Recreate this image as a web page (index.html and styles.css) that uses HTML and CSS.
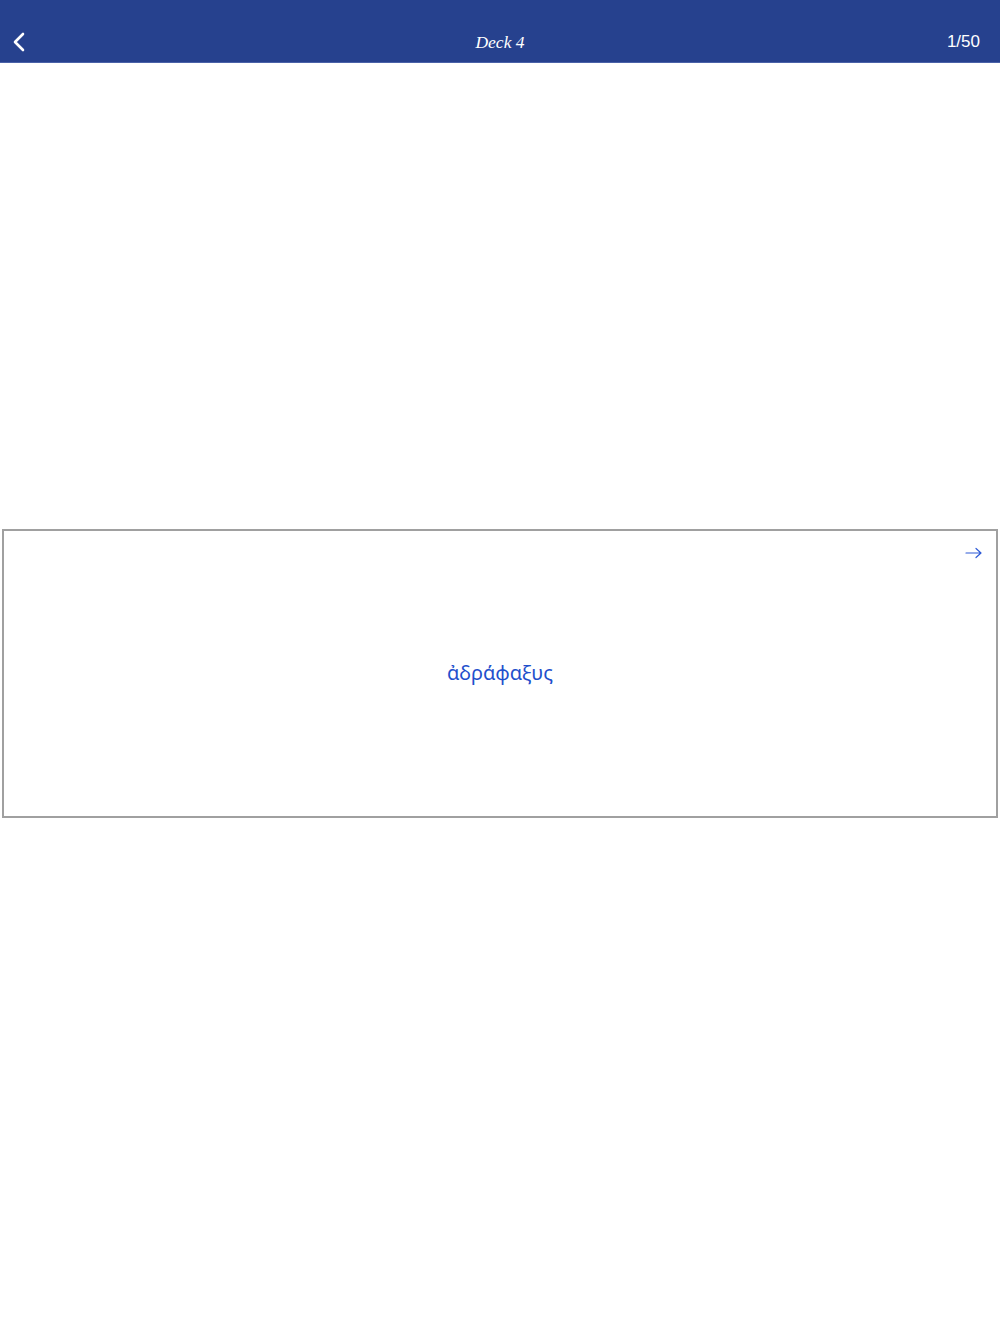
FILE: index.html
```html
<!DOCTYPE html>
<html>
<head>
<meta charset="utf-8">
<link rel="stylesheet" href="styles.css">
</head>
<body>
<header class="topbar">
  <div class="back">
    <svg width="14" height="20" viewBox="0 0 14 20"><path d="M11 2 L3 10 L11 18" fill="none" stroke="#fff" stroke-width="2.6" stroke-linecap="round" stroke-linejoin="round"/></svg>
  </div>
  <div class="title">Deck 4</div>
  <div class="count">1/50</div>
</header>
<main class="stage">
  <section class="card">
    <div class="card-top">
      <svg class="arrow" width="18" height="12" viewBox="0 0 18 12"><path d="M1 6 H16 M11 1.5 L16 6 L11 10.5" fill="none" stroke="#2f5bd6" stroke-width="1.2" stroke-linecap="round" stroke-linejoin="round"/></svg>
    </div>
    <div class="word">ἀδράφαξυς</div>
  </section>
</main>
</body>
</html>
```
FILE: styles.css
```css
* { box-sizing: border-box; }
html, body { margin: 0; padding: 0; background: #fff; }
body { width: 1000px; height: 1334px; font-family: "Noto Sans", "Liberation Sans", sans-serif; }
.topbar {
  height: 63px;
  background: #26418e;
  border-bottom: 1px solid #4a62a8;
  display: grid;
  grid-template-columns: 1fr auto 1fr;
  align-items: center;
  padding: 22px 20px 0 12px;
  color: #fff;
}
.back { display: flex; align-items: center; }
.title {
  font-family: "Liberation Serif", "DejaVu Serif", serif;
  font-style: italic;
  font-size: 17.5px;
  padding-left: 8px;
}
.count {
  justify-self: end;
  font-family: "Liberation Sans", sans-serif;
  font-size: 17px;
}
.stage { padding: 466px 2px 0 2px; }
.card {
  height: 289px;
  border: 2px solid #a0a0a0;
  display: flex;
  flex-direction: column;
  padding-top: 16px;
}
.card-top { display: flex; justify-content: flex-end; padding-right: 13px; }
.word {
  text-align: center;
  color: #1f50cc;
  font-family: "Noto Sans", sans-serif;
  font-size: 20px;
  margin-top: 100px;
}
```
